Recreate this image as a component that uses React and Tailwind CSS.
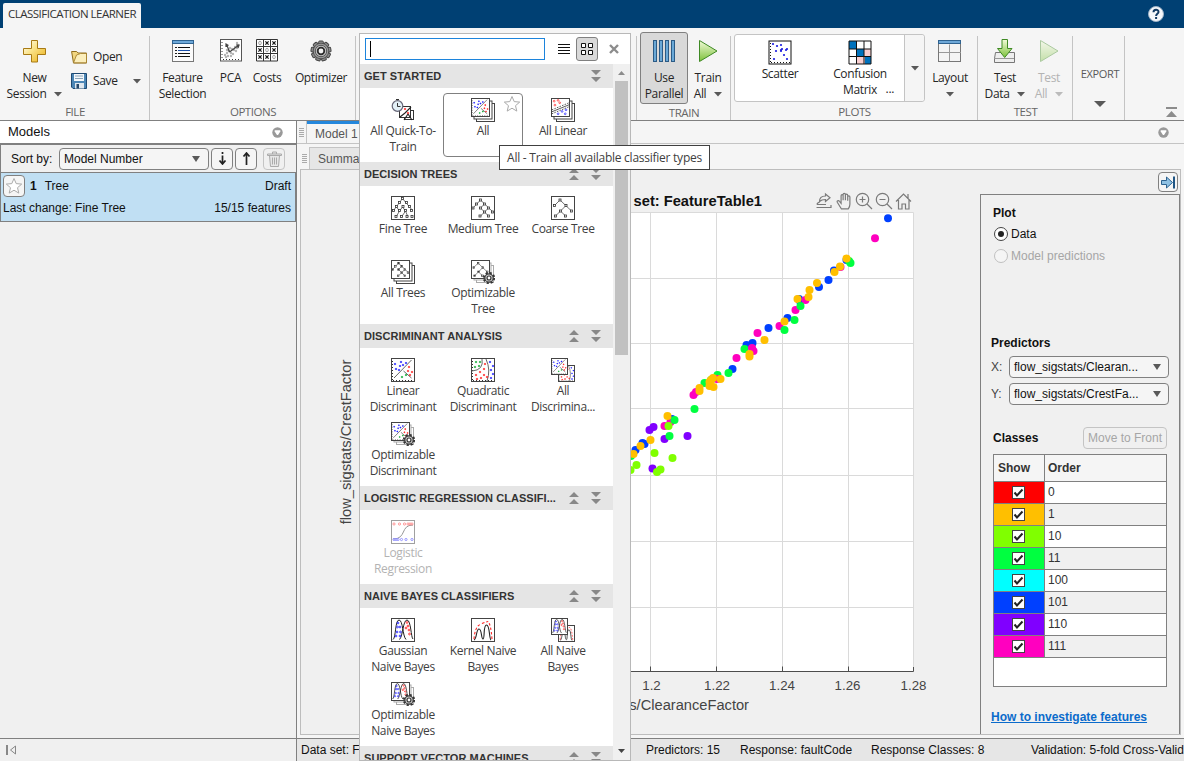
import React from "react";

const UIF = "font-['Open_Sans','Noto_Sans',sans-serif] leading-[16px]";
const UI = "font-['Open_Sans','Noto_Sans',sans-serif] text-[12px] leading-[16px] tracking-[-0.35px]";
const ARIAL = "font-['Liberation_Sans',Arial,sans-serif] text-[12px] leading-[16px]";

const Caret = ({ className = "text-[#595959]" }) => (
  <svg width="8" height="5" viewBox="0 0 8 5" className={className}><path d="M0 0h8L4 4.5z" fill="currentColor" /></svg>
);

const Gear = ({ cx, cy, r }) => (
  <g>
    <circle cx={cx} cy={cy} r={r * 0.86} fill="none" stroke="#333" strokeWidth={r * 0.4} strokeDasharray={`${r * 0.36} ${r * 0.315}`} />
    <circle cx={cx} cy={cy} r={r * 0.72} fill="#cfcfcf" stroke="#3a3a3a" strokeWidth={r * 0.2} />
    <circle cx={cx} cy={cy} r={r * 0.34} fill="#fff" stroke="#333" strokeWidth={r * 0.2} />
  </g>
);

/* ---------- toolstrip icons ---------- */
const PlusIcon = () => (
  <svg width="26" height="26" viewBox="0 0 26 26">
    <defs><linearGradient id="gold" x1="0" y1="0" x2="1" y2="1"><stop offset="0" stopColor="#fff" /><stop offset=".4" stopColor="#fbe58e" /><stop offset="1" stopColor="#e9ae14" /></linearGradient></defs>
    <path d="M9.500 1.500h6v8h8v6h-8v7.500h-6v-7.500h-8v-6h8z" fill="url(#gold)" stroke="#a87a14" />
  </svg>
);
const OpenIcon = () => (
  <svg width="17" height="14" viewBox="0 0 17 14">
    <path d="M.6 1.500h5l1.500 1.500h8.400v10H2.500z" fill="#f2d67f" stroke="#8f6c1c" />
    <path d="M2.500 12.800L5.500 5l4-1.500h6v9.300z" fill="#fbeebb" stroke="#a5812c" strokeWidth=".9" />
  </svg>
);
const SaveIcon = () => (
  <svg width="16" height="16" viewBox="0 0 16 16">
    <path d="M.500.500h15v15H2l-1.500-1.500z" fill="#4c86b5" stroke="#1f4a73" />
    <rect x="3" y="1" width="10" height="7" fill="#f4f8fb" /><path d="M4 3h8M4 5.500h8" stroke="#8aa3b8" />
    <rect x="4" y="10" width="9" height="5.500" fill="#dfe7ee" /><rect x="5.500" y="11" width="2.500" height="4.500" fill="#27496b" />
  </svg>
);
const FeatureIcon = () => (
  <svg width="24" height="26" viewBox="0 0 24 26">
    <rect x="1.500" y="2.500" width="21" height="20" fill="#fbfbfb" stroke="#777" />
    <rect x="1.500" y="1.500" width="21" height="3" fill="#6ea8d8" stroke="#2f6391" />
    <path d="M7 8.500h12M7 14.500h12M7 17.500h12" stroke="#111" />
    <path d="M7 11.500h12" stroke="#1b4fa8" />
    <path d="M4 8.500h2M4 11.500h2M4 14.500h2M4 17.500h2" stroke="#222" />
  </svg>
);
const PcaIcon = () => (
  <svg width="24" height="26" viewBox="0 0 24 26">
    <rect x="1.500" y=".500" width="21" height="21.500" fill="#fff" stroke="#555" />
    <path d="M3 3v18" stroke="#333" strokeDasharray="1 2" /><path d="M4 20.500h18" stroke="#333" strokeDasharray="1 2" />
    <g fill="#b5b5b5">{[[6,16],[8,14],[9,17],[10,12],[12,14],[13,10],[15,11],[16,8],[18,9],[19,6],[14,15],[8,11],[11,9],[17,12],[7,18],[18,4],[12,17]].map(([x, y], i) => <circle key={i} cx={x} cy={y} r="1.200" />)}</g>
    <path d="M10.500 13L7.500 5M10.500 13L20 6M7 8V5l2.500 1.500M17 6h3l-1 3" fill="none" stroke="#444" strokeWidth="1.200" />
  </svg>
);
const CostsIcon = () => (
  <svg width="24" height="26" viewBox="0 0 24 26">
    <path d="M1.500.500h21v21.500h-21zM8.500.500v21.500M15.500.500v21.500M1.500 7.500h21M1.500 14.500h21" fill="#fff" stroke="#333" />
    {[0, 1, 2].map((r) => [0, 1, 2].map((c) => {
      const x = 5 + c * 7, y = 4 + r * 7;
      return r === c
        ? <ellipse key={`${r}${c}`} cx={x} cy={y} rx="1.300" ry="1.800" fill="none" stroke="#999" strokeWidth=".9" />
        : <path key={`${r}${c}`} d={`M${x - 1.6} ${y - 1.6}l3.200 3.200M${x + 1.6} ${y - 1.6}l-3.200 3.200`} stroke="#111" strokeWidth="1.200" />;
    }))}
  </svg>
);
const GearIcon = () => (
  <svg width="24" height="26" viewBox="0 0 24 26">
    <g stroke="#444" fill="#8d8d8d">{[0, 40, 80, 120, 160, 200, 240, 280, 320].map((a) => <rect key={a} x="9.700" y="2" width="4.600" height="5" rx="1" transform={`rotate(${a} 12 12)`} />)}</g>
    <circle cx="12" cy="12" r="7.800" fill="#9a9a9a" stroke="#444" strokeWidth=".8" />
    <circle cx="12" cy="12" r="5.700" fill="#c9c9c9" stroke="#555" />
    <circle cx="12" cy="12" r="3.300" fill="#f3f3f3" stroke="#2c2c2c" strokeWidth="1.800" />
  </svg>
);
const ParallelIcon = () => (
  <svg width="24" height="26" viewBox="0 0 24 26">
    {[1, 7, 13, 19].map((x) => <rect key={x} x={x + 0.5} y="1.500" width="3" height="21" fill="#6aa8d6" stroke="#2b5b86" />)}
  </svg>
);
const PlayIcon = ({ faded }) => (
  <svg width="22" height="26" viewBox="0 0 22 26" className={faded ? "opacity-40" : ""}>
    <defs><linearGradient id="grn" x1="0" y1="0" x2="0" y2="1"><stop offset="0" stopColor="#f2fbd9" /><stop offset="1" stopColor="#7cc13a" /></linearGradient></defs>
    <path d="M2.500 1.500v21L20 12z" fill="url(#grn)" stroke="#3f8a24" strokeLinejoin="round" />
  </svg>
);
const ScatterIcon = () => (
  <svg width="26" height="26" viewBox="0 0 26 26">
    <rect x="2" y="1" width="22" height="23" fill="#fff" stroke="#111" />
    <path d="M3.500 3v20" stroke="#111" strokeDasharray="1 2" /><path d="M4 22.500h19" stroke="#111" strokeDasharray="1 2" />
    <g fill="#1a1ae0">{[[6,4],[10,6],[14,5],[9,11],[14,11],[15,9],[19,10],[20,9],[14,10],[17,15],[7,19],[20,19]].map(([x, y], i) => <circle key={i} cx={x} cy={y} r="1.100" />)}</g>
  </svg>
);
const ConfusionIcon = () => (
  <svg width="26" height="26" viewBox="0 0 26 26">
    <rect x="1" y="1" width="24" height="24" fill="#fff" />
    <path d="M2 1h8v8H2zM10 9h8v8h-8zM17 17h7v7h-7z" fill="#0072bd" /><path d="M17 9h7v8h-7zM10 17h8v7h-8z" fill="#f9cfd0" />
    <path d="M2 1h22v23H2zM9.500 1v23M17 1v23M2 9h22M2 16.500h22" fill="none" stroke="#111" />
  </svg>
);
const LayoutIcon = () => (
  <svg width="26" height="26" viewBox="0 0 26 26">
    <rect x="1.500" y="1.500" width="22" height="21" fill="#f4f4f4" stroke="#777" />
    <rect x="1.500" y="1.500" width="22" height="3" fill="#6ea8d8" stroke="#2f6391" />
    <path d="M12.500 5.500v17M2 13.500h22" stroke="#999" />
  </svg>
);
const TestIcon = () => (
  <svg width="24" height="26" viewBox="0 0 24 26">
    <path d="M2.500 13.500h19v10h-20v-4z" fill="#eee" stroke="#777" /><path d="M2 19.500h19" stroke="#999" />
    <path d="M9 .500h5.500v9h4.500l-7.300 9-7.200-9H9z" fill="url(#grn)" stroke="#3f8a24" />
  </svg>
);

/* ---------- gallery icons ---------- */
const Frame = ({ x = 0.5, y = 0.5, s = 23, c = "#444" }) => <rect x={x} y={y} width={s} height={s} fill="#fff" stroke={c} />;
const Dots = ({ pts, c, r = 0.9 }) => <g fill={c}>{pts.map(([x, y], i) => <path key={i} d={`M${x - r - 0.4} ${y}L${x} ${y - r - 0.4}L${x + r + 0.4} ${y}L${x} ${y + r + 0.4}z`} />)}</g>;
const Svg24 = ({ children, className }) => <svg width="24" height="24" viewBox="0 0 24 24" className={className}>{children}</svg>;
const Rings = ({ pts, c, r = 1.1 }) => <g fill="none" stroke={c} strokeWidth=".9">{pts.map(([x, y], i) => <circle key={i} cx={x} cy={y} r={r} />)}</g>;
const Tree = ({ pts, edges }) => (
  <g fill="#fff" stroke="#333">
    <path d={edges} fill="none" strokeWidth=".7" />
    {pts.map(([x, y], i) => <rect key={i} x={x - 1} y={y - 1} width="2" height="2" strokeWidth=".8" />)}
  </g>
);
const LinearBody = () => (
  <g>
    <path d="M1.500 3v19" stroke="#333" strokeDasharray="1 2" /><path d="M2 22.500h20" stroke="#333" strokeDasharray="1 2" />
    <path d="M3 20L20.500 2M12.500 13l8 7" stroke="#666" fill="none" />
    <Dots c="#2020ff" pts={[[10,4],[15,5],[4,6],[9,8],[5,11],[12,7],[8,12]]} />
    <Dots c="#f22" pts={[[18,9],[17,13],[21,14],[19,17]]} /><Dots c="#1a3" pts={[[11,19],[15,17]]} />
  </g>
);
const QuadBody = () => (
  <g>
    <path d="M1.500 3v19" stroke="#333" strokeDasharray="1 2" /><path d="M2 22.500h20" stroke="#333" strokeDasharray="1 2" />
    <path d="M11 1Q13 12 1 13M15 1q5 11 1 22" stroke="#666" fill="none" />
    <Dots c="#1a3" pts={[[5,4],[9,4],[4,9],[8,8]]} /><Dots c="#f22" pts={[[14,6],[13,11],[9,14],[5,17],[13,17],[10,20],[16,19],[6,21]]} />
    <Dots c="#2020ff" pts={[[19,4],[22,8],[20,12],[22,16],[20,20]]} />
  </g>
);
const GaussBody = () => (
  <g>
    <path d="M2 21.500C5 20 4 2 8 2s3.500 16 7 19.500" stroke="#222" fill="none" strokeWidth="1" />
    <path d="M8.500 21.500C12 18 12 2 16 2s4 18 6 19" stroke="#222" fill="none" strokeWidth="1" />
    <Rings c="#2020ff" pts={[[7,5],[9,9],[6.500,9],[6,14],[9.500,14],[5,18],[9,18]]} r={0.9} /><Rings c="#f22" pts={[[16,4.500],[17,8],[15,10],[18,12],[18.500,16]]} r={0.9} />
  </g>
);
const KernelBody = () => (
  <g>
    <path d="M3 22c3-1 2-11 5-11s2 10 4 10 0-14 3.500-14 2.500 14 4.500 15" stroke="#222" fill="none" strokeWidth="1.100" />
    <path d="M3 21Q4 9 9 6.500T17 3.500q3 3 4 18" stroke="#f22" fill="none" strokeWidth="1.100" strokeDasharray="2.500 2" />
  </g>
);
const Stack = ({ children, gear }) => (
  <Svg24>
    {[[5, 5], [2.500, 2.500]].map(([x, y], i) => <Frame key={i} x={x + 0.5} y={y + 0.5} s={gear ? 17 : 18} c={gear ? "#aaa" : "#444"} />)}
    <Frame s={18} />
    <g transform="scale(.79)">{children}</g>
    {gear && <Gear cx={18} cy={18} r={5.8} />}
  </Svg24>
);
const Duo = ({ a, b }) => (
  <Svg24>
    <Frame x={7.5} y={7.5} s={16} /><g transform="translate(7 7) scale(.7)">{b}</g>
    <Frame s={16} /><g transform="scale(.7)">{a}</g>
  </Svg24>
);
const FineTreeBody = () => <Tree edges="M11.500 2.500L2.500 14.500M11.500 2.500L21.500 14.500M11.500 11l-3 4M5.500 11l3 4M11.500 11l3 4M5 21l3.500-6M14.500 15l-4 6M14.500 15l2.500 6" pts={[[11.500,2.500],[8.500,6.500],[15.500,6.500],[5.500,10.500],[12,10.500],[18.500,10.500],[2.500,14.500],[8.500,14.500],[14.500,14.500],[20.500,14.500],[5,20.500],[10.500,20.500],[16,20.500],[21,20.500]]} />;
const MediumTreeBody = () => <Tree edges="M9.500 4L2 12M9.500 4L22 16M13.500 8l-4 4M17.500 12l-8 8M9.500 12l8 8" pts={[[9.500,4],[5.500,8],[13.500,8],[2,12],[9.500,12],[17.500,12],[13.500,16],[21.500,16],[9,20],[17.500,20]]} />;
const CoarseTreeBody = () => <Tree edges="M9 4L3.500 9.500M9 4l11.500 11M15 9.500L4.500 20M9.500 15l5 5" pts={[[9,4],[3.500,9.500],[15,9.500],[20.500,15],[9.500,15],[4.500,20],[14.500,20]]} />;

const icons = {
  quick: (
    <Svg24>
      <Frame x={13.5} y={12.5} s={9} c="#333" /><Frame x={8.5} y={8.5} s={11} c="#333" />
      <path d="M9 19l5-4 6-6M13 22l4-6 4 6" stroke="#222" fill="none" strokeWidth="1.100" />
      <Dots c="#f22" pts={[[17, 15], [14, 11]]} />
      <circle cx="6.500" cy="8" r="5.300" fill="#e3f0f7" stroke="#667" strokeWidth="1.200" /><path d="M6.500 5v3.500h3M5 1.500h3" stroke="#333" fill="none" />
    </Svg24>
  ),
  all: <Stack><LinearBody /></Stack>,
  allLinear: (
    <Stack>
      <path d="M1 15L23 6M1 20L23 11" stroke="#333" strokeDasharray="2 1.500" /><path d="M1 17.500L23 8.500" stroke="#333" />
      <Rings c="#f22" pts={[[4,4],[9,3],[5,9],[11,6]]} /><Rings c="#2020ff" pts={[[14,17],[19,15],[9,20],[18,20]]} />
    </Stack>
  ),
  fine: <Svg24><Frame /><FineTreeBody /></Svg24>,
  medium: <Svg24><Frame /><MediumTreeBody /></Svg24>,
  coarse: <Svg24><Frame /><CoarseTreeBody /></Svg24>,
  allTrees: <Stack><MediumTreeBody /></Stack>,
  optTree: <Stack gear><CoarseTreeBody /></Stack>,
  linear: <Svg24><Frame /><LinearBody /></Svg24>,
  quad: <Svg24><Frame /><QuadBody /></Svg24>,
  allDisc: <Duo a={<LinearBody />} b={<QuadBody />} />,
  optDisc: <Stack gear><LinearBody /></Stack>,
  logistic: (
    <Svg24 className="opacity-50">
      <Frame /><path d="M2 19c14 0 7-14 20-14" stroke="#333" fill="none" />
      <Rings c="#f22" pts={[[3,4],[8.500,4],[13.500,4],[17,4],[19,4],[21,4]]} /><Rings c="#2020ff" pts={[[3,19.500],[5,19.500],[7,19.500],[10.500,19.500],[15,19.500],[21,19.500]]} />
    </Svg24>
  ),
  gauss: <Svg24><Frame /><GaussBody /></Svg24>,
  kernel: <Svg24><Frame /><KernelBody /></Svg24>,
  allNb: <Duo a={<GaussBody />} b={<KernelBody />} />,
  optNb: <Stack gear><GaussBody /></Stack>,
};

const sections = [
  { title: "GET STARTED", up: false, items: [["quick", "All Quick-To-", "Train"], ["all", "All"], ["allLinear", "All Linear"]] },
  { title: "DECISION TREES", up: true, items: [["fine", "Fine Tree"], ["medium", "Medium Tree"], ["coarse", "Coarse Tree"], ["allTrees", "All Trees"], ["optTree", "Optimizable", "Tree"]] },
  { title: "DISCRIMINANT ANALYSIS", up: true, items: [["linear", "Linear", "Discriminant"], ["quad", "Quadratic", "Discriminant"], ["allDisc", "All", "Discrimina..."], ["optDisc", "Optimizable", "Discriminant"]] },
  { title: "LOGISTIC REGRESSION CLASSIFI...", up: true, items: [["logistic", "Logistic", "Regression"]] },
  { title: "NAIVE BAYES CLASSIFIERS", up: true, items: [["gauss", "Gaussian", "Naive Bayes"], ["kernel", "Kernel Naive", "Bayes"], ["allNb", "All Naive", "Bayes"], ["optNb", "Optimizable", "Naive Bayes"]] },
  { title: "SUPPORT VECTOR MACHINES", up: true, items: [] },
];

const Star = ({ size = 18 }) => (
  <svg width={size} height={size} viewBox="0 0 18 18"><path d="M9 1.500l2.200 5.100 5.500.5-4.200 3.600 1.300 5.400L9 13.200l-4.800 2.900 1.300-5.400L1.300 7.100l5.500-.5z" fill="#fff" stroke="#aaa" /></svg>
);
const DblUp = () => <svg width="10" height="12" viewBox="0 0 10 12" fill="#888"><path d="M0 5h10L5 0zM0 12h10L5 7z" /></svg>;
const DblDown = () => <svg width="10" height="12" viewBox="0 0 10 12" fill="#888"><path d="M0 0h10L5 5zM0 7h10L5 12z" /></svg>;

function Gallery() {
  return (
    <div className="absolute left-[359px] top-[33px] flex h-[728px] w-[272px] flex-col border border-[#b8b8b8] bg-white">
      <div className="flex h-[30px] shrink-0 items-center pl-[5px]">
        <div className="flex h-[22px] w-[180px] items-center border border-[#1c84dc] bg-white pl-1"><div className="h-4 w-px bg-black" /></div>
        <svg className="ml-[13px]" width="12" height="11" viewBox="0 0 12 11"><path d="M0 .500h12M0 3.500h12M0 6.500h12M0 9.500h12" stroke="#111" /></svg>
        <div className="ml-1.5 flex h-6 w-[22px] items-center justify-center rounded-[3px] border border-[#808080] bg-[#d9d9d9]">
          <svg width="12" height="12" viewBox="0 0 12 12"><path d="M.500.500h4v4h-4zM7.500.500h4v4h-4zM.500 7.500h4v4h-4zM7.500 7.500h4v4h-4z" fill="#fff" stroke="#111" /></svg>
        </div>
        <svg className="ml-[11px]" width="10" height="10" viewBox="0 0 10 10"><path d="M1 1l8 8M9 1L1 9" stroke="#8c8c8c" strokeWidth="2.400" /></svg>
      </div>
      <div className="flex min-h-0 flex-1">
        <div className="w-[253px] overflow-hidden">
          {sections.map((s) => (
            <section key={s.title}>
              <div className="flex h-6 items-center bg-[#e5e5e5] pl-1 pr-3">
                <span className="flex-1 whitespace-nowrap font-['Liberation_Sans',Arial,sans-serif] text-[11px] font-bold tracking-[0.04px] text-[#333]">{s.title}</span>
                <div className="flex gap-3">{s.up && <DblUp />}<DblDown /></div>
              </div>
              <div className="grid grid-cols-[80px_80px_80px] px-[3px] py-[5px]">
                {s.items.map(([id, ...lines]) => (
                  <div key={id} className={`relative flex h-16 flex-col items-center rounded-[4px] border pt-[4px] ${id === "all" ? "border-[#808080]" : "border-transparent"}`}>
                    {icons[id]}
                    <div className={`mt-px text-center whitespace-nowrap ${UI} ${id === "logistic" ? "text-[#b3b3b3]" : "text-[#404040]"}`}>
                      {lines.map((l) => <div key={l}>{l}</div>)}
                    </div>
                    {id === "all" && <div className="absolute right-[1px] top-[1px]"><Star /></div>}
                  </div>
                ))}
              </div>
            </section>
          ))}
        </div>
        <div className="flex w-[17px] flex-col items-center bg-[#f0f0f0]">
          <svg className="my-[7px] shrink-0" width="7" height="4" viewBox="0 0 7 4"><path d="M0 4h7L3.500 0z" fill="#8c8c8c" /></svg>
          <div className="-mt-px h-[274px] w-[13px] shrink-0 bg-[#c1c1c1]" />
          <div className="flex-1" />
          <svg className="mb-[7px]" width="7" height="4" viewBox="0 0 7 4"><path d="M0 0h7L3.500 4z" fill="#444" /></svg>
        </div>
      </div>
    </div>
  );
}

/* ---------- toolstrip ---------- */
const Tool = ({ className, icon, l1, l2, caret, disabled }) => (
  <div className={`flex flex-col items-center pt-[11px] ${UI} ${disabled ? "text-[#b3b3b3]" : "text-[#262626]"} ${className}`}>
    <div className="flex h-[31px] items-start">{icon}</div>
    <div>{l1}</div>
    <div className="flex h-4 items-center gap-2 whitespace-nowrap">{l2}{caret && <Caret className={disabled ? "text-[#bbb]" : "text-[#595959]"} />}</div>
  </div>
);
const Group = ({ className, label, children }) => (
  <div className={`relative flex h-[92px] shrink-0 flex-col ${className}`}>
    <div className="flex h-[77px]">{children}</div>
    <div className={`pt-px text-center text-[#666] text-[11.5px] tracking-[-0.45px] ${UIF}`}>{label}</div>
    <div className="absolute bottom-0 right-0 top-2 w-px bg-[#c4c4c4]" />
  </div>
);

function Toolstrip() {
  return (
    <div className="flex h-[93px] shrink-0 border-b border-[#808080] bg-[#f5f5f5]">
      <Group className="w-[150px]" label="FILE">
        <Tool className="ml-[5px] w-[59px]" icon={<PlusIcon />} l1="New" l2="Session" caret />
        <div className={`flex flex-1 flex-col pl-[7px] pt-[21px] ${UI} text-[#262626]`}>
          <div className="flex h-4 items-center gap-[5px]"><OpenIcon />Open</div>
          <div className="mt-2 flex h-4 items-center gap-[6px] pr-[9px]"><SaveIcon /><span className="flex-1">Save</span><Caret /></div>
        </div>
      </Group>
      <Group className="w-[206px]" label="OPTIONS">
        <Tool className="w-[65px]" icon={<FeatureIcon />} l1="Feature" l2="Selection" />
        <Tool className="w-[31px]" icon={<PcaIcon />} l1="PCA" />
        <Tool className="w-[42px]" icon={<CostsIcon />} l1="Costs" />
        <Tool className="w-[66px]" icon={<GearIcon />} l1="Optimizer" />
      </Group>
      <Group className="w-[281px]" label="" />
      <Group className="w-[94px]" label="TRAIN">
        <div className="ml-[3px] mt-1 h-[72px] w-12 rounded-[3px] border border-[#808080] bg-[#d9d9d9]">
          <Tool className="-mt-[5px]" icon={<ParallelIcon />} l1="Use" l2="Parallel" />
        </div>
        <Tool className="w-10" icon={<PlayIcon />} l1="Train" l2="All" caret />
      </Group>
      <Group className="w-[247px]" label="PLOTS">
        <div className={`ml-[3px] mt-1.5 flex h-[68px] w-[191px] rounded-[3px] border border-[#c4c4c4] bg-white ${UI} text-[#262626]`}>
          <div className="ml-[5px] flex w-20 flex-col items-center pt-[5px]"><ScatterIcon />Scatter</div>
          <div className="relative flex w-20 flex-col items-center pt-[5px] text-center"><ConfusionIcon />Confusion<br /><span>Matrix</span><span className="absolute right-[6px] top-[46px]">...</span></div>
          <div className="ml-auto flex w-5 items-center justify-center rounded-r-[3px] border-l border-[#c4c4c4] bg-[#f5f5f5]"><Caret /></div>
        </div>
        <Tool className="w-[50px]" icon={<LayoutIcon />} l1="Layout" caret />
      </Group>
      <Group className="w-[95px]" label="TEST">
        <Tool className="ml-[3px] w-[48px]" icon={<TestIcon />} l1="Test" l2="Data" caret />
        <Tool className="w-10" icon={<PlayIcon faded />} l1="Test" l2="All" caret disabled />
      </Group>
      <Group className="w-[52px]">
        <div className={`ml-0.5 flex w-full flex-col items-center pt-[38px] text-[11px] tracking-[-0.35px] text-[#595959] ${UIF}`}>EXPORT
          <svg className="mt-[19px] shrink-0" width="12" height="6" viewBox="0 0 12 6"><path d="M0 0h12L6 6z" fill="#595959" /></svg>
        </div>
      </Group>
      <div className="flex flex-1 items-end justify-end pb-[3px] pr-[7px]">
        <svg width="11" height="10" viewBox="0 0 11 10" fill="#8c8c8c"><path d="M0 0h11v2H0zM0 10h11L5.500 4z" /></svg>
      </div>
    </div>
  );
}

const PanelMenu = () => (
  <svg width="11" height="11" viewBox="0 0 11 11"><circle cx="5.500" cy="5.500" r="5.200" fill="#999" /><path d="M2.700 3.300h5.600v1.200L6 8H5L2.700 4.500z" fill="#fff" /></svg>
);
const Grip = () => <svg width="5" height="9" viewBox="0 0 5 9"><path d="M0 .500h5M0 2.500h5M0 4.500h5M0 6.500h5M0 8.500h5" stroke="#aaa" /></svg>;
const SelectArrow = () => <svg width="8" height="6" viewBox="0 0 8 6"><path d="M0 0h8L4 6z" fill="#595959" /></svg>;

function ModelsPanel() {
  return (
    <div className={`flex w-[297px] shrink-0 flex-col border-r border-[#808080] bg-[#f0f0f0] text-[#111] ${ARIAL}`}>
      <div className="flex h-[23px] items-center justify-between border-b border-[#808080] bg-white pl-2 pr-[13px] text-[13px]"><span>Models</span><PanelMenu /></div>
      <div className="flex h-[28px] items-center border-l border-t border-[#808080] pl-2.5">
        <span className="w-[48px]">Sort by:</span>
        <div className="flex h-[22px] w-[150px] items-center justify-between rounded-[4px] border border-[#808080] bg-[#f5f5f5] pl-1 pr-2">Model Number<SelectArrow /></div>
        <div className="ml-[2px] flex h-[22px] w-[22px] items-center justify-center rounded-[4px] border border-[#808080] bg-[#f5f5f5]">
          <svg width="9" height="13" viewBox="0 0 9 13"><path d="M4.500 3.500v8M1.500 8.500l3 3.500 3-3.500M4.500 0v2" fill="none" stroke="#222" strokeWidth="1.700" /></svg>
        </div>
        <div className="ml-[2px] flex h-[22px] w-[22px] items-center justify-center rounded-[4px] border border-[#808080] bg-[#f5f5f5]">
          <svg width="9" height="13" viewBox="0 0 9 13"><path d="M4.500 1v12M1.500 4.500l3-3.500 3 3.500" fill="none" stroke="#222" strokeWidth="1.700" /></svg>
        </div>
        <div className="ml-[6px] flex h-[22px] w-[22px] items-center justify-center rounded-[4px] border border-[#c4c4c4]">
          <svg width="15" height="16" viewBox="0 0 15 16" stroke="#aaa" fill="#e6e6e6"><path d="M2.500 4.500h10l-1 11h-8z" /><path d="M.500 3h14v1.500H.500zM5.500 3V1h4v2M5.500 6.500v7M7.500 6.500v7M9.500 6.500v7" /></svg>
        </div>
      </div>
      <div className="flex h-[50px] flex-col border border-[#808080] bg-[#c0dff3] pl-[2px] pr-[4px] pt-[2px]">
        <div className="flex h-[22px] items-center">
          <div className="flex h-[22px] w-[22px] items-center justify-center rounded-[4px] border border-[#808080] bg-[#f5f5f5]"><Star /></div>
          <b className="ml-[5px]">1</b><span className="ml-[8px] flex-1">Tree</span>Draft
        </div>
        <div className="flex h-[22px] items-center justify-between"><span>Last change: Fine Tree</span><span>15/15 features</span></div>
      </div>
    </div>
  );
}

/* ---------- scatter plot ---------- */
const BL = "#0040ff", PK = "#ff00bf", OR = "#ffbf00", GN = "#00ff40", VI = "#8000ff", LM = "#80ff00";
const points = [
  [BL,888,218.300],[PK,875,238.300],[BL,846.5,260],[GN,849,261],[GN,850.500,263],[OR,846.500,258.500],[BL,834,270.500],[PK,840.500,267],[OR,840,266.500],[OR,834.500,272],
  [BL,828.500,280],[BL,819,287],[OR,817,283],[BL,799,299],[BL,800,301],[PK,805.500,300],[OR,809.500,290],[OR,808.500,297],[OR,797.500,299],[PK,795.500,310],[GN,800.500,306],
  [BL,787.500,318],[PK,779.500,326],[GN,794.500,320],[GN,784.500,330],[OR,784.500,321.500],[BL,768.500,328],[PK,757.500,333],[OR,764.500,340],
  [BL,746.500,345],[BL,752.500,343],[GN,744.500,349],[PK,752,348],[PK,753.500,351],[OR,749.500,354],[OR,749.500,356.500],[PK,736.500,358],[BL,732.500,369],[GN,728.500,373],
  [GN,717.500,375],[GN,711,380],[GN,704.500,383],[PK,717,379],[PK,693.500,395],[PK,696,392],[OR,699.500,388],[OR,699.500,391],[OR,709.500,382],[OR,709.500,386],[OR,713,378],[OR,711,380],[OR,720.500,379],[OR,713.500,387],
  [GN,694.500,409],[VI,649.500,430],[VI,653.500,427],[PK,664.500,426],[BL,672,419],[PK,670.500,422],[GN,674.500,420],[OR,667.500,416],[LM,668.500,426],
  [VI,664.500,439],[GN,669.500,436],[VI,687.500,436],[BL,635.500,450],[BL,642.500,443],[BL,644.500,444],[OR,650.500,440],[OR,640.500,446],[GN,631,456],[OR,633.500,454],
  [LM,654.500,453],[LM,672.500,458],[LM,636.500,465],[LM,630.500,470],[VI,652.500,468.500],[LM,657,472],[LM,660.500,469.500],
];
const PLOT = "font-['Liberation_Sans',Arial,sans-serif]";

function Plot() {
  return (
    <svg width="679" height="564" viewBox="301 170 679 564" className="shrink-0">
      <rect x="391" y="212" width="522" height="460" fill="#fff" />
      <path d="M391 212.500H913.500V671M391 278.500h522M391 343.500h522M391 408.500h522M391 475.500h522M391 541.500h522M391 607.500h522M650.500 212v459M716.500 212v459M782.500 212v459M848.500 212v459" fill="none" stroke="#dadada" />
      <path d="M391 671.500H913.500V667M650.500 671v-4.500M716.500 671v-4.500M782.500 671v-4.500M848.500 671v-4.500" fill="none" stroke="#4d4d4d" />
      {points.map(([c, x, y], i) => <circle key={i} cx={x} cy={y} r="4" fill={c} />)}
      <g className={`${PLOT} text-[13.300px]`} fill="#444" textAnchor="middle">
        <text x="651.500" y="690">1.2</text><text x="717" y="690">1.22</text><text x="782" y="690">1.24</text><text x="847.500" y="690">1.26</text><text x="913.500" y="690">1.28</text>
      </g>
      <text className={`${PLOT} text-[14.670px]`} fill="#444" textAnchor="end" x="749" y="710">flow_sigstats/ClearanceFactor</text>
      <text className={`${PLOT} text-[14.670px]`} fill="#444" textAnchor="middle" transform="translate(351 442) rotate(-90)">flow_sigstats/CrestFactor</text>
      <text className={`${PLOT} text-[14.670px] font-bold`} fill="#111" textAnchor="end" x="762" y="206">Data set: FeatureTable1</text>
      <g fill="none" stroke="#7a7a7a" strokeWidth="1.200">
        <path d="M816.500 207.500h14.500v-2.500M817 204.500h9M817 204.500c0-1.500 2-2.500 3-2.500M819.500 201.500c0-3.500 2.500-5.500 6-5.500v-2l4.500 3.800-4.500 3.700v-2c-3 0-4.500.5-6 2z" />
        <path d="M840.500 208.500l-4-6.500c-.8-1.700 1.300-2.200 2.200-1l1.600 2v-7.500c0-1.600 2-1.600 2 0v4.500-5.800c0-1.600 2.300-1.600 2.300 0v5.800-5c0-1.600 2.300-1.600 2.300 0v5.500-3.800c0-1.600 2.200-1.600 2.200 0v7.300c0 2-.8 3.500-1.600 4.500z" transform="translate(.8 .3)" />
        <circle cx="862.500" cy="199.500" r="6.200" /><path d="M867 204l5 5M859.500 199.500h6M862.500 196.500v6" />
        <circle cx="882.500" cy="199.500" r="6.200" /><path d="M887 204l5 5M879.500 199.500h6" />
        <path d="M896 201.500l7.500-7.500 7.500 7.500M898.500 200v9h3.500v-5h3.500v5h3.500v-9M908 198v-4" />
      </g>
    </svg>
  );
}

const classes = [["0", "bg-[#ff0000]"], ["1", "bg-[#ffbf00]"], ["10", "bg-[#80ff00]"], ["11", "bg-[#00ff40]"], ["100", "bg-[#00ffff]"], ["101", "bg-[#0040ff]"], ["110", "bg-[#8000ff]"], ["111", "bg-[#ff00bf]"]];

const Select = ({ label, value }) => (
  <div className="flex h-[22px] items-center">
    <span className="w-[18px] text-[#444]">{label}</span>
    <div className="flex h-[22px] w-[160px] items-center justify-between rounded-[4px] border border-[#808080] bg-[#f5f5f5] pl-1 pr-[7px]">{value}<SelectArrow /></div>
  </div>
);

function Options() {
  return (
    <div className="flex w-[200px] flex-col">
      <div className="flex h-6 justify-end pr-[2px] pt-[2px]">
        <div className="flex h-5 w-5 items-center justify-center rounded-[4px] border border-[#808080] bg-[#f5f5f5]">
          <svg width="15" height="13" viewBox="0 0 15 13"><path d="M.500 4.500h5v-3.500l6 5.500-6 5.500V8.500h-5z" fill="#8fc1e3" stroke="#2d628f" /><path d="M13 .500v12" stroke="#1f5584" strokeWidth="2" /></svg>
        </div>
      </div>
      <div className={`flex flex-1 flex-col border border-b-0 border-[#808080] pl-2.5 text-[#111] ${ARIAL}`}>
        <b className="ml-0.5 mt-[10px]">Plot</b>
        <div className="ml-[3px] mt-[5px] flex h-4 items-center gap-[3px]">
          <div className="flex h-[14px] w-[14px] items-center justify-center rounded-full border border-[#444] bg-white"><div className="h-1.5 w-1.5 rounded-full bg-[#222]" /></div>Data
        </div>
        <div className="ml-[3px] mt-[6px] flex h-4 items-center gap-[3px] text-[#a6a6a6]">
          <div className="h-[14px] w-[14px] rounded-full border border-[#c0c0c0] bg-[#f5f5f5]" />Model predictions
        </div>
        <b className="mb-[5px] mt-[71px]">Predictors</b>
        <Select label="X:" value="flow_sigstats/Clearan..." />
        <div className="h-[5px]" />
        <Select label="Y:" value="flow_sigstats/CrestFa..." />
        <div className="mr-3 mt-[22px] flex h-[22px] items-center justify-between pl-0.5">
          <b>Classes</b><div className="flex h-[22px] w-[84px] items-center justify-center whitespace-nowrap rounded-[4px] border border-[#c4c4c4] text-[#a6a6a6]">Move to Front</div>
        </div>
        <div className="ml-[2px] mt-[5px] flex h-[233px] w-[174px] flex-col border border-[#808080] bg-white">
          <div className="flex h-[27px] border-b border-[#808080] bg-[#f5f5f5] font-bold text-[#333]">
            <div className="flex w-[51px] items-center border-r border-[#808080] pl-1">Show</div><div className="flex items-center pl-[3px]">Order</div>
          </div>
          {classes.map(([n, bg], i) => (
            <div key={n} className="flex h-[22px] border-b border-[#808080]">
              <div className={`flex w-[51px] items-center justify-center border-r border-[#808080] pr-px ${bg}`}>
                <svg width="13" height="13" viewBox="0 0 13 13"><rect x=".500" y=".500" width="12" height="12" fill="#fff" stroke="#444" /><path d="M2.500 6.500l2.500 3L10.500 3.500" fill="none" stroke="#222" strokeWidth="2" /></svg>
              </div>
              <div className={`flex-1 pl-[3px] pt-[2px] text-[#333] ${i % 2 ? "bg-[#f0f0f0]" : "bg-white"}`}>{n}</div>
            </div>
          ))}
        </div>
        <b className="mt-[22px] text-[#0b6bcb] underline">How to investigate features</b>
      </div>
    </div>
  );
}

export default function App() {
  return (
    <div className="relative flex h-[761px] w-[1184px] flex-col overflow-hidden bg-[#f5f5f5]">
      <header className="flex h-7 shrink-0 items-end justify-between bg-[#004073] pl-[3px] pr-5">
        <div className={`flex h-[25px] w-[138px] items-center justify-center whitespace-nowrap rounded-t-[2px] bg-[#f5f5f5] pb-1 text-[11.5px] tracking-[-0.5px] text-[#333] ${UIF}`}>CLASSIFICATION LEARNER</div>
        <svg className="mb-[6px]" width="16" height="16" viewBox="0 0 16 16"><circle cx="8" cy="8" r="7.500" fill="#f5f7fa" stroke="#9fb3c6" /><path d="M5.500 6.300c0-3.400 5-3.300 5-.4 0 1.900-2.400 1.900-2.400 4M8.100 11v2" fill="none" stroke="#123a63" strokeWidth="2" /></svg>
      </header>
      <Toolstrip />
      <div className="flex min-h-0 flex-1">
        <ModelsPanel />
        <main className="flex flex-1 flex-col">
          <div className="flex h-[23px] items-center border-b border-[#c4c4c4] pr-[15px]">
            <div className="flex h-full w-[10px] items-center justify-center border-r border-[#c4c4c4]"><Grip /></div>
            <div className={`flex h-full w-[90px] items-center border-t-[3px] border-[#2487dc] pl-[8px] text-[#555] ${ARIAL}`}>Model 1</div>
            <div className="flex-1" /><PanelMenu />
          </div>
          <div className="flex h-[25px] items-end pl-[3px]">
            <div className="flex h-[22px] w-[9px] items-center justify-center"><Grip /></div>
            <div className={`flex h-[22px] w-[80px] items-center border border-b-0 border-[#c4c4c4] bg-[#e6e6e6] pl-2 text-[#555] ${ARIAL}`}>Summary</div>
          </div>
          <div className="ml-[3px] mr-[3px] flex flex-1 border border-[#bdbdbd] bg-[#f0f0f0]">
            <Plot />
            <Options />
          </div>
          <div className="h-[3px]" />
        </main>
      </div>
      <footer className={`flex h-[23px] shrink-0 items-center overflow-hidden whitespace-nowrap border-t border-[#808080] bg-[#e6e6e6] text-[#111] ${ARIAL}`}>
        <div className="flex h-full w-[297px] shrink-0 items-center border-r border-[#808080] bg-[#f0f0f0] pl-1.5"><svg width="11" height="10" viewBox="0 0 11 10"><path d="M1 0v10" stroke="#888" strokeWidth="2" /><path d="M9.500 1v8L4.500 5z" fill="none" stroke="#888" /></svg></div>
        <div className="w-[349px] shrink-0 pl-[4px]">Data set: FeatureTable1</div>
        <div className="w-[94px] shrink-0">Predictors: 15</div>
        <div className="w-[131px] shrink-0">Response: faultCode</div>
        <div className="w-[160px] shrink-0">Response Classes: 8</div>
        <div className="shrink-0">Validation: 5-fold Cross-Validation</div>
      </footer>
      <Gallery />
      <div className={`absolute left-[499px] top-[145px] flex h-[25px] w-[211px] items-center justify-center whitespace-nowrap border border-[#404040] bg-white text-[12px] tracking-[-0.25px] text-[#404040] ${UIF}`}>All - Train all available classifier types</div>
    </div>
  );
}
